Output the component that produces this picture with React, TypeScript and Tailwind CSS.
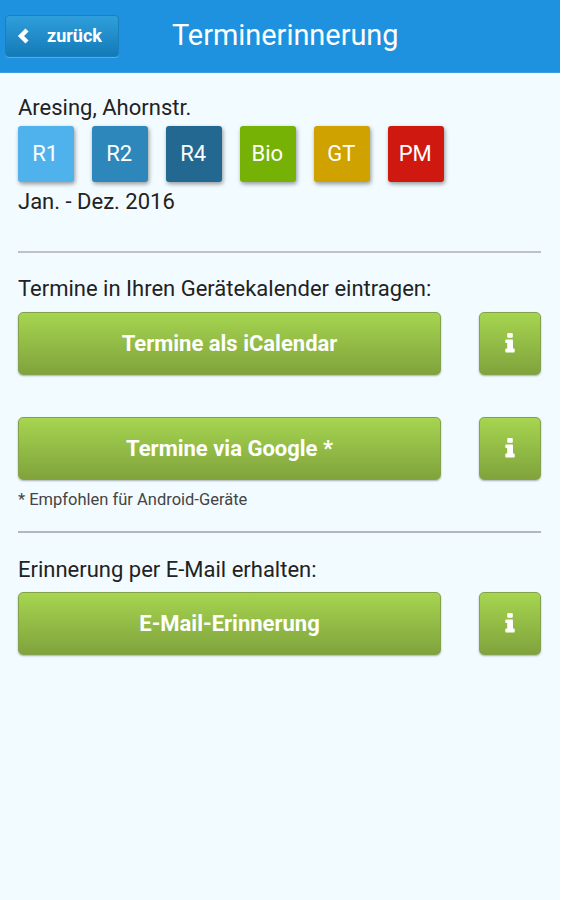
import type { ReactNode } from 'react';

interface Bin {
    label: string;
    color: string;
}

const bins: Bin[] = [
    { label: 'R1', color: 'bg-[#4fb2ec]' },
    { label: 'R2', color: 'bg-[#2e87bb]' },
    { label: 'R4', color: 'bg-[#226891]' },
    { label: 'Bio', color: 'bg-[#76b206]' },
    { label: 'GT', color: 'bg-[#cfa200]' },
    { label: 'PM', color: 'bg-[#cf1810]' },
];

function InfoIcon() {
    return (
        <svg viewBox="0 0 10 20" className="h-5 w-[10px]" fill="currentColor">
            <rect x="2.2" y="0" width="5.6" height="4.8" rx="1" />
            <path d="M1 6.500h6.300q.7 0 .7.7V15.500h1q.7 0 .7.7v2.500q0 .8-.7.8H1q-.7 0-.7-.8v-2.500q0-.7.7-.7h1.200V10H1q-.7 0-.7-.7V7.200q0-.7.7-.7z" />
        </svg>
    );
}

function GreenButton({ className, label, children }: { className: string; label?: string; children: ReactNode }) {
    return (
        <button
            aria-label={label}
            className={`flex h-[63px] items-center justify-center rounded-[5px] border border-[#83a24a] bg-linear-to-b from-[#a6d550] to-[#80a33c] text-[22px] font-bold text-white shadow-[0_1px_2px_rgba(0,0,0,0.3)] ${className}`}
        >
            {children}
        </button>
    );
}

function ActionRow({ text }: { text: string }) {
    return (
        <div className="flex justify-between">
            <GreenButton className="w-[423px]">{text}</GreenButton>
            <GreenButton className="w-[62px] pb-0.5" label="Info">
                <InfoIcon />
            </GreenButton>
        </div>
    );
}

export default function App() {
    return (
        <div className="min-h-screen bg-white font-['Roboto',sans-serif] text-[#222]">
            <div className="min-h-screen w-[560px] bg-[#f2fbff]">
                <header className="flex h-[73px] items-center border-b border-[#3a9fe0] bg-[#1e92de] pl-[5px] text-white">
                    <button className="flex h-[42px] w-[114px] items-center rounded-[4px] border border-[#1b7fbd] bg-linear-to-b from-[#2f9fdb] to-[#137ab8] pb-0.5 pl-[11px] text-[18px] font-bold shadow-[0_1px_0_rgba(255,255,255,0.25)]">
                        <svg viewBox="0 0 12 16" className="mt-0.5 h-4 w-3" fill="none" stroke="currentColor" strokeWidth="4.4">
                            <path d="M10 2 4 8l6 6" />
                        </svg>
                        <span className="ml-[18px]">zurück</span>
                    </button>
                    <h1 className="ml-[53px] pb-px text-[28.9px]">Terminerinnerung</h1>
                </header>

                <main className="flex flex-col pr-[19px] pl-[18px] text-[22px]">
                    <p className="mt-[21px] h-8 leading-[28px]">Aresing, Ahornstr.</p>
                    <div className="flex gap-[18.5px]">
                        {bins.map((bin) => (
                            <div
                                key={bin.label}
                                className={`flex h-14 w-[55.5px] items-center justify-center rounded-[3px] pr-px pb-0.5 text-white shadow-[1px_2px_4px_rgba(0,0,0,0.4)] ${bin.color}`}
                            >
                                {bin.label}
                            </div>
                        ))}
                    </div>
                    <p className="mt-1.5 h-[27px] leading-[28px]">Jan. - Dez. 2016</p>

                    <hr className="mt-[36px] border-t-2 border-[#bfc2c4]" />

                    <p className="mt-[22px] mb-[9px] h-7 leading-[28px]">Termine in Ihren Gerätekalender eintragen:</p>
                    <ActionRow text="Termine als iCalendar" />
                    <div className="mt-[42px]">
                        <ActionRow text="Termine via Google *" />
                    </div>
                    <p className="mt-2 h-6 text-[16.5px] leading-6 text-[#444]">* Empfohlen für Android-Geräte</p>

                    <hr className="mt-[19px] border-t-2 border-[#b5b8ba]" />

                    <p className="mt-[23px] mb-[8px] h-7 leading-[28px]">Erinnerung per E-Mail erhalten:</p>
                    <ActionRow text="E-Mail-Erinnerung" />
                </main>
            </div>
        </div>
    );
}
